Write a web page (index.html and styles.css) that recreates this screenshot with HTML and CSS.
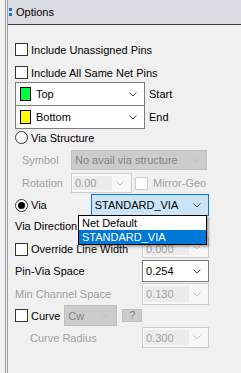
FILE: index.html
```html
<!DOCTYPE html>
<html lang="en">
<head>
  <meta charset="UTF-8">
  <title>Options</title>
  <link rel="stylesheet" href="styles.css">
</head>
<body>
  <div class="panel">
    <div class="header">
      <span class="grip"><i></i><i></i></span>
      <span class="title">Options</span>
    </div>
    <div class="content">
      <div class="row r-cb1">
        <span class="check"></span><span class="label">Include Unassigned Pins</span>
      </div>
      <div class="row r-cb2">
        <span class="check"></span><span class="label">Include All Same Net Pins</span>
      </div>

      <div class="layers">
        <div class="layer-combos">
          <div class="combo layer">
            <span class="swatch green"></span><span class="value">Top</span>
            <svg class="chev" width="8" height="5"><polyline points="0.5,0.5 4,4 7.5,0.5"/></svg>
          </div>
          <div class="combo layer second">
            <span class="swatch yellow"></span><span class="value">Bottom</span>
            <svg class="chev" width="8" height="5"><polyline points="0.5,0.5 4,4 7.5,0.5"/></svg>
          </div>
        </div>
        <div class="layer-labels">
          <span class="side">Start</span>
          <span class="side">End</span>
        </div>
      </div>

      <div class="row r-radio1">
        <span class="radio"></span><span class="label">Via Structure</span>
      </div>

      <div class="row r-symbol indent">
        <span class="label dim fixed">Symbol</span>
        <div class="combo locked w-symbol">
          <span class="value">No avail via structure</span>
          <svg class="chev off" width="8" height="5"><polyline points="0.5,0.5 4,4 7.5,0.5"/></svg>
        </div>
      </div>

      <div class="row r-rotation indent">
        <span class="label dim fixed">Rotation</span>
        <div class="combo faded w-rotation">
          <span class="field">0.00</span>
          <svg class="chev off" width="8" height="5"><polyline points="0.5,0.5 4,4 7.5,0.5"/></svg>
        </div>
        <span class="check off"></span><span class="label dim">Mirror-Geo</span>
      </div>

      <div class="row r-via">
        <span class="radio on"></span><span class="label">Via</span>
        <div class="combo active w-via">
          <span class="value">STANDARD_VIA</span>
          <svg class="chev" width="8" height="5"><polyline points="0.5,0.5 4,4 7.5,0.5"/></svg>
        </div>
        <div class="droplist">
          <div class="item">Net Default</div>
          <div class="item selected">STANDARD_VIA</div>
        </div>
      </div>

      <div class="row r-dir">
        <span class="label">Via Direction</span>
      </div>

      <div class="row r-override">
        <span class="check bottom"></span><span class="label bottom">Override Line Width</span>
        <div class="combo faded w-value">
          <span class="field low">0.000</span>
          <svg class="chev off" width="8" height="5"><polyline points="0.5,0.5 4,4 7.5,0.5"/></svg>
        </div>
      </div>

      <div class="row r-pinvia">
        <span class="label">Pin-Via Space</span>
        <div class="combo plain w-value">
          <span class="value">0.254</span>
          <svg class="chev" width="8" height="5"><polyline points="0.5,0.5 4,4 7.5,0.5"/></svg>
        </div>
      </div>

      <div class="row r-channel">
        <span class="label dim">Min Channel Space</span>
        <div class="combo faded w-value">
          <span class="field">0.130</span>
          <svg class="chev off" width="8" height="5"><polyline points="0.5,0.5 4,4 7.5,0.5"/></svg>
        </div>
      </div>

      <div class="row r-curve">
        <span class="check"></span><span class="label">Curve</span>
        <div class="combo locked w-cw">
          <span class="value">Cw</span>
          <svg class="chev off" width="8" height="5"><polyline points="0.5,0.5 4,4 7.5,0.5"/></svg>
        </div>
        <span class="help">?</span>
      </div>

      <div class="row r-radius">
        <span class="label dim radius-label">Curve Radius</span>
        <div class="combo faded w-value">
          <span class="field">0.300</span>
          <svg class="chev off" width="8" height="5"><polyline points="0.5,0.5 4,4 7.5,0.5"/></svg>
        </div>
      </div>
    </div>
  </div>
</body>
</html>
```

FILE: styles.css
```css
html, body {
  margin: 0;
  padding: 0;
  height: 100%;
}
body {
  background: #f0f0f0;
  font-family: "Liberation Sans", Arial, sans-serif;
  font-size: 11px;
  color: #000;
  overflow: hidden;
}
.panel {
  margin-left: 5px;
  height: 100%;
  border-left: 3px double #a0a0a0;
}
.header {
  height: 24px;
  background: #dadae2;
  border-bottom: 1px solid #3c3c3c;
  display: flex;
  align-items: center;
}
.grip {
  display: flex;
  flex-direction: column;
  gap: 2px;
  margin-left: 1px;
  margin-right: 4px;
}
.grip i {
  display: block;
  width: 3px;
  height: 3px;
  background: #1a6fd6;
}
.content {
  padding-left: 7px;
  width: 194px;
}
.row {
  display: flex;
  align-items: center;
  position: relative;
}
.indent {
  padding-left: 7px;
}
.label {
  white-space: nowrap;
}
.dim {
  color: #a0a0a0;
}
.fixed {
  width: 49px;
}
.check {
  width: 13px;
  height: 13px;
  box-sizing: border-box;
  border: 1px solid #333;
  background: #fff;
  margin-right: 3px;
  flex: none;
}
.check.off {
  border-color: #cccccc;
  margin-left: 3px;
  margin-right: 5px;
}
.bottom {
  align-self: flex-end;
  margin-bottom: 2px;
}
.label.bottom {
  margin-bottom: 3px;
}
.radio {
  width: 13px;
  height: 13px;
  box-sizing: border-box;
  border: 1px solid #333;
  border-radius: 50%;
  background: #fff;
  margin-right: 3px;
  flex: none;
  display: flex;
  align-items: center;
  justify-content: center;
}
.radio.on::after {
  content: "";
  width: 7px;
  height: 7px;
  border-radius: 50%;
  background: #000;
}

/* combo boxes */
.combo {
  display: flex;
  align-items: center;
  box-sizing: border-box;
  border: 1px solid #7a7a7a;
  height: 100%;
  position: relative;
}
.combo .value {
  flex: 1;
  padding-left: 3px;
  white-space: nowrap;
}
.chev {
  flex: none;
  margin-right: 7px;
  fill: none;
  stroke: #444;
  stroke-width: 1;
}
.chev.off {
  stroke: #bfbfbf;
}
.plain {
  background: #fff;
}
.locked {
  background: #cccccc;
  border-color: #bfbfbf;
  color: #838383;
}
.faded {
  background: #f7f7f7;
  border-color: #cccccc;
  color: #a0a0a0;
}
.faded .field {
  flex: 1;
  align-self: stretch;
  margin: 2px 4px 2px 1px;
  padding-left: 2px;
  background: #ebebeb;
  display: flex;
  align-items: center;
}
.faded .field.low {
  padding-top: 2px;
}
.active {
  background: #cce4f7;
  border-color: #0078d7;
}
.w-symbol { width: 136px; }
.w-rotation { width: 61px; }
.w-via { width: 129px; margin-left: 44px; }
.w-value { width: 67px; margin-left: auto; }
.w-cw { width: 53px; margin-left: 4px; }

/* layer combos */
.layers {
  display: flex;
  margin-top: 3px;
}
.layer-combos {
  width: 130px;
}
.layer {
  height: 24px;
  background: #fff;
}
.layer.second {
  margin-top: -1px;
}
.layer .value {
  padding-left: 5px;
}
.swatch {
  width: 11px;
  height: 14px;
  box-sizing: border-box;
  border: 1px solid #000;
  margin-left: 4px;
  flex: none;
}
.green { background: #00ff3c; }
.yellow { background: #ffff00; }
.layer-labels {
  display: flex;
  flex-direction: column;
  padding-left: 4px;
}
.side {
  height: 23px;
  display: flex;
  align-items: center;
}

/* row placement */
.r-cb1 { margin-top: 18px; height: 13px; }
.r-cb2 { margin-top: 10px; height: 13px; }
.r-radio1 { margin-top: 2px; height: 13px; }
.r-symbol { margin-top: 6px; height: 20px; }
.r-rotation { margin-top: 3px; height: 20px; }
.r-via { margin-top: 1px; height: 22px; }
.r-dir { margin-top: 0; height: 20px; }
.r-override { margin-top: 1px; height: 21px; }
.r-pinvia { margin-top: 2px; height: 22px; }
.r-channel { margin-top: 1px; height: 22px; }
.r-curve { margin-top: 0; height: 21px; }
.r-radius { margin-top: 1px; height: 21px; }
.radius-label { padding-left: 15px; }

.droplist {
  position: absolute;
  left: 63px;
  top: 21px;
  width: 129px;
  box-sizing: border-box;
  border: 1px solid #000;
  background: #fff;
  box-shadow: 2px 2px 2px rgba(0, 0, 0, 0.3);
  z-index: 2;
}
.item {
  height: 14px;
  line-height: 14px;
  padding-left: 3px;
}
.item.selected {
  background: #0078d7;
  color: #fff;
}
.help {
  width: 20px;
  height: 13px;
  box-sizing: border-box;
  margin-left: 5px;
  background: #cccccc;
  border: 1px solid #bfbfbf;
  color: #838383;
  text-align: center;
  line-height: 11px;
}
```
